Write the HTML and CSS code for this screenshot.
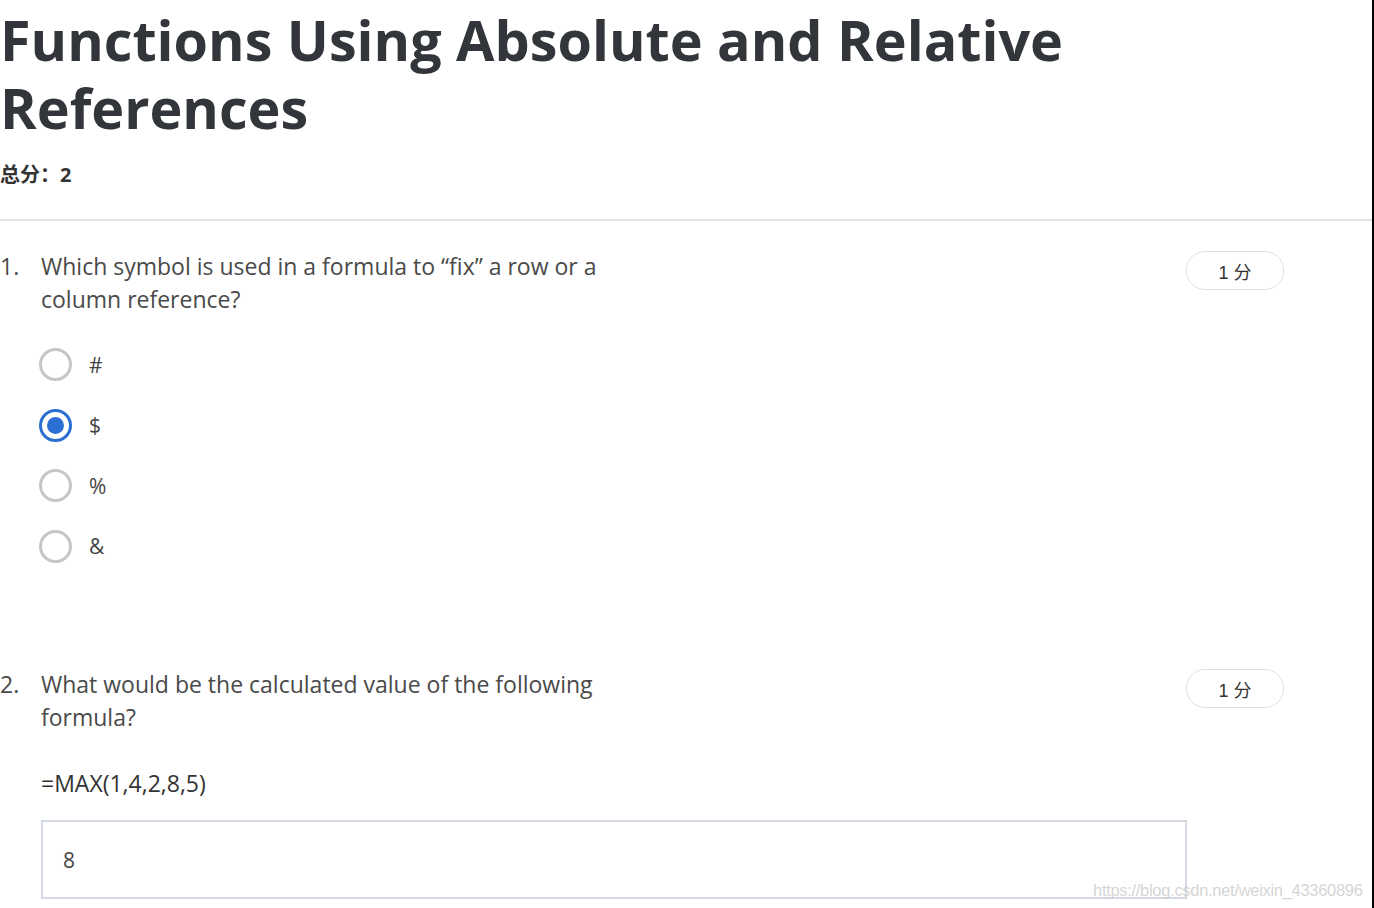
FILE: index.html
```html
<!DOCTYPE html>
<html lang="zh">
<head>
<meta charset="utf-8">
<title>Functions Using Absolute and Relative References</title>
<link rel="stylesheet" href="styles.css">
</head>
<body>
<div class="page">
  <header class="header">
    <h1 class="title">Functions Using Absolute and Relative References</h1>
    <div class="total">总分：2</div>
  </header>
  <section class="question q1">
    <div class="q-head">
      <span class="q-num">1.</span>
      <div class="q-text">Which symbol is used in a formula to “fix” a row or a column reference?</div>
      <span class="points">1 分</span>
    </div>
    <ul class="options">
      <li class="option"><span class="radio"></span><span class="opt-label">#</span></li>
      <li class="option"><span class="radio checked"></span><span class="opt-label">$</span></li>
      <li class="option"><span class="radio"></span><span class="opt-label">%</span></li>
      <li class="option"><span class="radio"></span><span class="opt-label">&amp;</span></li>
    </ul>
  </section>
  <section class="question q2">
    <div class="q-head">
      <span class="q-num">2.</span>
      <div class="q-text">What would be the calculated value of the following formula?</div>
      <span class="points">1 分</span>
    </div>
    <div class="formula">=MAX(1,4,2,8,5)</div>
    <div class="answer">8</div>
  </section>
  <div class="watermark">https://blog.csdn.net/weixin_43360896</div>
</div>
</body>
</html>
```
FILE: styles.css
```css
html, body {
  margin: 0;
  padding: 0;
  background: #fff;
}
body {
  font-family: "Open Sans", "Noto Sans CJK SC", sans-serif;
  overflow: hidden;
}
.page {
  position: relative;
  width: 1372px;
  height: 908px;
  border-right: 2px solid #000;
  overflow: hidden;
}
.header {
  padding: 5px 0 0 0;
  border-bottom: 2px solid #e2e2e2;
  height: 221px;
  box-sizing: border-box;
}
.title {
  margin: 0;
  font-size: 55.7px;
  line-height: 68px;
  font-weight: 700;
  color: #323539;
  width: 1080px;
}
.total {
  margin-top: 22px;
  font-size: 20px;
  font-weight: 700;
  color: #333;
  line-height: 24px;
}
.q1 {
  margin-top: 29px;
}
.q2 {
  margin-top: 105.5px;
}
.q-head {
  display: flex;
  align-items: flex-start;
}
.q-num {
  width: 41px;
  font-size: 23px;
  line-height: 33px;
  color: #4a4a4a;
}
.q-text {
  width: 580px;
  font-size: 23px;
  line-height: 33px;
  color: #4a4a4a;
}
.points {
  margin-left: auto;
  margin-right: 88px;
  margin-top: 1px;
  width: 96px;
  height: 37px;
  border: 1px solid #e0e0e0;
  border-radius: 19px;
  display: flex;
  align-items: center;
  justify-content: center;
  font-family: "Liberation Sans", "Noto Sans CJK SC", sans-serif;
  font-size: 18px;
  color: #333;
}
.options {
  list-style: none;
  margin: 32px 0 0 0;
  padding: 0 0 0 39px;
  display: flex;
  flex-direction: column;
  gap: 27.5px;
}
.option {
  display: flex;
  align-items: center;
  height: 33px;
}
.radio {
  width: 27px;
  height: 27px;
  border: 3px solid #c6c6c6;
  border-radius: 50%;
  box-sizing: content-box;
  position: relative;
  flex: none;
}
.radio.checked {
  border-color: #2a6fd1;
}
.radio.checked::after {
  content: "";
  position: absolute;
  left: 5px;
  top: 5px;
  width: 17px;
  height: 17px;
  border-radius: 50%;
  background: #2a6fd1;
}
.opt-label {
  margin-left: 17px;
  font-size: 21px;
  color: #444;
}
.formula {
  margin: 33px 0 0 41px;
  font-size: 23px;
  line-height: 33px;
  color: #333;
}
.answer {
  margin: 20px 0 0 41px;
  width: 1146px;
  height: 79px;
  box-sizing: border-box;
  border: 2px solid #d3d9e3;
  padding-left: 20px;
  display: flex;
  align-items: center;
  font-size: 21px;
  color: #444;
}
.watermark {
  position: absolute;
  left: 1093px;
  top: 880px;
  font-family: "Liberation Sans", sans-serif;
  font-size: 16.5px;
  line-height: 20px;
  letter-spacing: -0.3px;
  color: rgba(205, 205, 205, 0.85);
  white-space: nowrap;
}
```
